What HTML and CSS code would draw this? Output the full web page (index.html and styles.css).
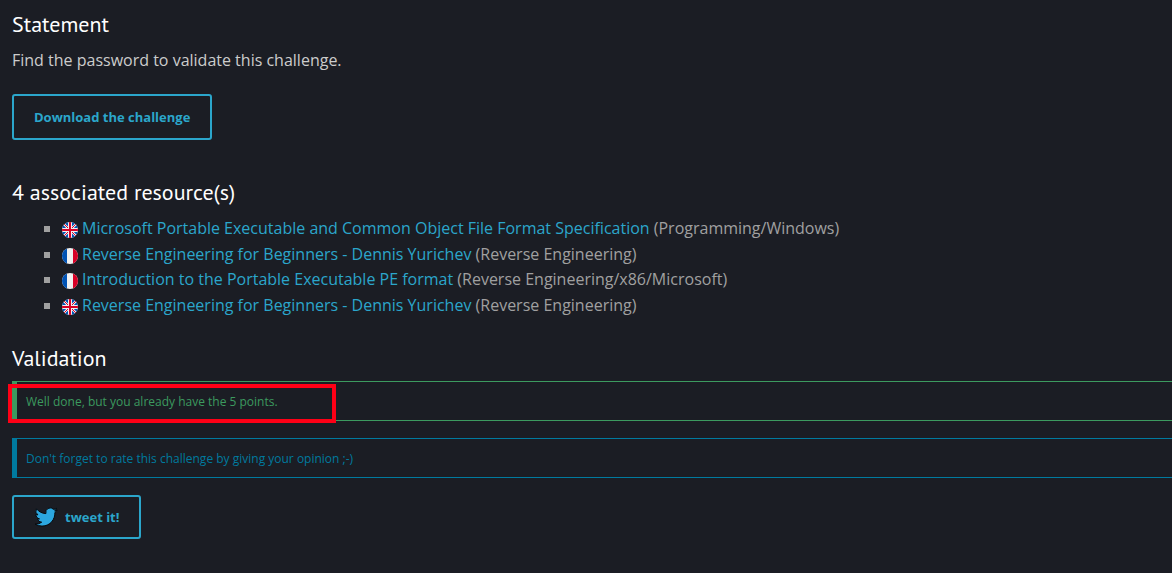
FILE: index.html
```html
<!DOCTYPE html>
<html lang="en">
<head>
<meta charset="utf-8">
<meta name="viewport" content="width=device-width, initial-scale=1">
<title>Challenge</title>
<link rel="stylesheet" href="styles.css">
</head>
<body>
<svg class="sprite" aria-hidden="true">
  <symbol id="flag-en" viewBox="0 0 16 16">
    <clipPath id="disc-en"><circle cx="8" cy="8" r="8"/></clipPath>
    <g clip-path="url(#disc-en)">
      <path fill="#f0f0f0" d="M0 0h16v16H0z"/>
      <path fill="#0052b4" d="M6 0v4.5L1.500 0zM0 1.800V6h4.200zM10 0v4.500L14.500 0zM16 1.800V6h-4.200zM6 16v-4.500L1.500 16zM0 14.200V10h4.200zM10 16v-4.500l4.500 4.500zM16 14.200V10h-4.200z"/>
      <path stroke="#d80027" stroke-width="1" d="M2 2l4 4M14 2l-4 4M2 14l4-4M14 14l-4-4"/>
      <path fill="#d80027" d="M7 0h2v7h7v2H9v7H7V9H0V7h7z"/>
    </g>
  </symbol>
  <symbol id="flag-fr" viewBox="0 0 16 16">
    <clipPath id="disc-fr"><circle cx="8" cy="8" r="8"/></clipPath>
    <g clip-path="url(#disc-fr)">
      <path fill="#f0f0f0" d="M0 0h16v16H0z"/>
      <path fill="#0052b4" d="M0 0h5v16H0z"/>
      <path fill="#d80027" d="M11 0h5v16h-5z"/>
    </g>
  </symbol>
</svg>
<main class="page">
  <section class="statement">
    <h2 class="title">Statement</h2>
    <p class="text">Find the password to validate this challenge.</p>
    <a class="button" href="#download">Download the challenge</a>
  </section>

  <section class="resources">
    <h2 class="title">4 associated resource(s)</h2>
    <ul class="list">
      <li class="item"><svg class="flag" role="img" aria-label="English"><use href="#flag-en"/></svg><span><a class="link" href="#r1">Microsoft Portable Executable and Common Object File Format Specification</a> (Programming/Windows)</span></li>
      <li class="item"><svg class="flag" role="img" aria-label="French"><use href="#flag-fr"/></svg><span><a class="link" href="#r2">Reverse Engineering for Beginners - Dennis Yurichev</a> (Reverse Engineering)</span></li>
      <li class="item"><svg class="flag" role="img" aria-label="French"><use href="#flag-fr"/></svg><span><a class="link" href="#r3">Introduction to the Portable Executable PE format</a> (Reverse Engineering/x86/Microsoft)</span></li>
      <li class="item"><svg class="flag" role="img" aria-label="English"><use href="#flag-en"/></svg><span><a class="link" href="#r4">Reverse Engineering for Beginners - Dennis Yurichev</a> (Reverse Engineering)</span></li>
    </ul>
  </section>

  <section class="validation">
    <h2 class="title">Validation</h2>
    <div class="alert success">Well done, but you already have the 5 points.<span class="marker"></span></div>
    <div class="alert info">Don't forget to rate this challenge by giving your opinion ;-)</div>
    <a class="button tweet" href="#tweet">
      <svg class="bird" viewBox="0 0 24 24" aria-hidden="true"><path d="M23.200 5.100a9 9 0 0 1-2.600.7 4.600 4.600 0 0 0 2-2.500 9 9 0 0 1-2.900 1.100 4.550 4.550 0 0 0-7.800 4.200A13 13 0 0 1 2.500 3.800a4.600 4.600 0 0 0 1.400 6.100 4.500 4.500 0 0 1-2.100-.6c0 2.200 1.500 4.200 3.700 4.600a4.600 4.600 0 0 1-2.100.1 4.600 4.600 0 0 0 4.300 3.200A9.200 9.200 0 0 1 1 19.100a13 13 0 0 0 7 2c8.500 0 13.200-7.100 12.900-13.600a9 9 0 0 0 2.300-2.400z"/></svg>
      <span>tweet it!</span>
    </a>
  </section>
</main>
</body>
</html>
```
FILE: styles.css
```css
body {
  margin: 0;
  background: #1b1d24;
  color: #a0a0a0;
  font: 16px/1.6 "Open Sans", "Noto Sans", sans-serif;
}

.sprite {
  position: absolute;
  width: 0;
  height: 0;
}

.page {
  padding: 8px 0 32px 12px;
}

.title {
  margin: 0;
  color: #fff;
  font: 400 22px/32px "PT Sans", "Noto Sans", sans-serif;
}

.text {
  margin: 8px 0 22px;
  line-height: 24px;
  color: #ccc;
}

.button {
  display: inline-flex;
  align-items: center;
  box-sizing: border-box;
  height: 46px;
  padding: 0 20px;
  border: 2px solid #2ba6cb;
  border-radius: 3px;
  color: #2ba6cb;
  font-size: 13px;
  font-weight: 700;
  text-decoration: none;
}

.resources {
  margin-top: 36px;
}

.list {
  margin: 8px 0 0;
  padding: 0 0 0 50px;
  list-style: none;
}

.item {
  position: relative;
  display: flex;
  align-items: center;
  gap: 4px;
}

.item::before {
  content: "";
  position: absolute;
  left: -18px;
  top: 10px;
  width: 6px;
  height: 6px;
  background: #a0a0a0;
}

.flag {
  flex: none;
  width: 16px;
  height: 16px;
  margin-top: 3px;
}

.link {
  color: #2ba6cb;
  text-decoration: none;
}

.validation {
  margin-top: 24px;
}

.alert {
  position: relative;
  margin-bottom: 17px;
  padding: 10px 9px 8px;
  border: 1px solid;
  border-left-width: 5px;
  border-right: 0;
  font-size: 12px;
  line-height: 20px;
}

.success {
  margin-top: 7px;
  border-color: #3c9a5f;
  color: #3c9a5f;
}

.info {
  border-color: #007a9f;
  color: #007a9f;
}

.marker {
  position: absolute;
  top: 2px;
  left: -9px;
  box-sizing: border-box;
  width: 328px;
  height: 39px;
  border: 4px solid #ff0016;
}

.tweet {
  gap: 7px;
  height: 44px;
}

.bird {
  width: 24px;
  height: 24px;
  fill: #2ca7e0;
  stroke: #06090d;
  stroke-width: 1;
}
```
